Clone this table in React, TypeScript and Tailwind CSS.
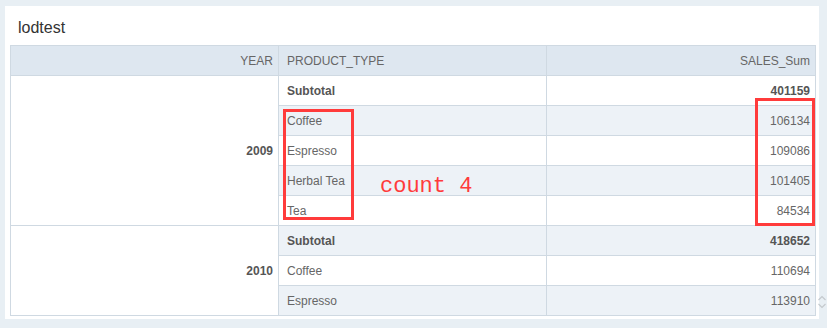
import React from "react";

type Row = { year?: { label: string; span: number }; type: string; value: string; bold?: boolean; stripe: boolean };

const rows: Row[] = [
  { year: { label: "2009", span: 5 }, type: "Subtotal", value: "401159", bold: true, stripe: false },
  { type: "Coffee", value: "106134", stripe: true },
  { type: "Espresso", value: "109086", stripe: false },
  { type: "Herbal Tea", value: "101405", stripe: true },
  { type: "Tea", value: "84534", stripe: false },
  { year: { label: "2010", span: 3 }, type: "Subtotal", value: "418652", bold: true, stripe: true },
  { type: "Coffee", value: "110694", stripe: false },
  { type: "Espresso", value: "113910", stripe: true },
];

export default function App() {
  return (
    <div
      className="relative w-[827px] h-[328px] overflow-hidden bg-[#e8eff4] pt-[6px] pl-[5px]"
      style={{ fontFamily: '"Liberation Sans", Arial, sans-serif' }}
    >
      <div className="w-[814px] h-[313px] bg-white px-[5px] overflow-hidden">
        <div className="h-[39px] pt-[13px] pl-[8px] text-[16px] leading-[18px] text-[#333]">lodtest</div>
        <table className="table-fixed border-collapse w-[805px] text-[12px] text-[#666]">
          <colgroup>
            <col className="w-[268px]" />
            <col className="w-[268px]" />
            <col className="w-[269px]" />
          </colgroup>
          <thead>
            <tr className="h-[30px] bg-[#dee7f0]">
              <th className="border border-[#cfd9e2] font-normal text-right pr-[5px]">YEAR</th>
              <th className="border border-[#cfd9e2] font-normal text-left pl-[8px]">PRODUCT_TYPE</th>
              <th className="border border-[#cfd9e2] font-normal text-right pr-[5px]">SALES_Sum</th>
            </tr>
          </thead>
          <tbody>
            {rows.map((r, i) => (
              <tr key={i} className={`h-[30px] ${r.stripe ? "bg-[#edf2f7]" : "bg-white"}`}>
                {r.year && (
                  <td
                    rowSpan={r.year.span}
                    className="border border-[#cfd9e2] bg-white text-right pr-[5px] font-bold text-[#555] align-middle"
                  >
                    {r.year.label}
                  </td>
                )}
                <td className={`border border-[#cfd9e2] pl-[8px] ${r.bold ? "font-bold text-[#555]" : ""}`}>{r.type}</td>
                <td className={`border border-[#cfd9e2] text-right pr-[5px] ${r.bold ? "font-bold text-[#555]" : ""}`}>
                  {r.value}
                </td>
              </tr>
            ))}
          </tbody>
        </table>
      </div>

      {/* annotations */}
      <div className="absolute left-[283px] top-[109px] w-[71px] h-[111px] border-[3px] border-[#ff3b3b]" />
      <div className="absolute left-[755px] top-[98px] w-[60px] h-[128px] border-[3px] border-[#ff3b3b]" />
      <div
        className="absolute left-[380px] top-[176px] text-[22px] leading-[22px] text-[#ff3b3b] whitespace-pre"
        style={{ fontFamily: '"Liberation Mono", "Courier New", monospace' }}
      >
        count 4
      </div>

      {/* scroll arrows */}
      <svg className="absolute left-[817px] top-[294px]" width="10" height="16" viewBox="0 0 10 16" fill="none">
        <path d="M1.5 6 L5 2.5 L8.5 6" stroke="#c4c9cd" strokeWidth="1.2" />
        <path d="M1.5 10 L5 13.5 L8.5 10" stroke="#c4c9cd" strokeWidth="1.2" />
      </svg>
    </div>
  );
}
